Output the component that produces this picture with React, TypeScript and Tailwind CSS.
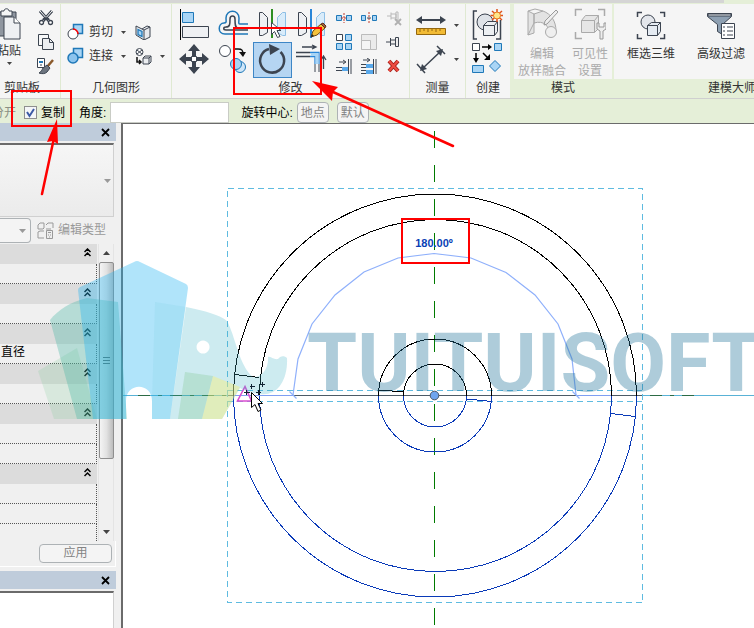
import { useState } from "react"
import type { ReactNode } from "react"

const dark = "#3c4450"
const blue = "#1f78b8"
const sky = "#a9d5f5"

function Svg({ w = 32, h = w, children }: { w?: number; h?: number; children: ReactNode }) {
  return <svg width={w} height={h} viewBox={`0 0 ${w} ${h}`} fill="none" className="block shrink-0">{children}</svg>
}

/* ---------- clipboard ---------- */
const PasteIcon = () => (
  <Svg w={26} h={32}>
    <path d="M1 4h19v24H1z" fill="#8f96a0" stroke={dark} />
    <path d="M5 5V3h3c0-3 5-3 5 0h3v5H5z" fill="#f4f5f6" stroke={dark} />
    <path d="M8 9h10l6 6v16H8z" fill="#eef0f3" stroke={dark} />
    <path d="M18 9v6h6" fill="#fff" stroke={dark} />
  </Svg>
)
const CutIcon = () => (
  <Svg w={16}>
    <path d="M2 1l9 10M14 1L5 11" stroke={dark} strokeWidth="3" />
    <path d="M2 1l9 10M14 1L5 11" stroke="#fff" />
    <path d="M5 9.500l3-1.500 3 1.500" stroke={dark} strokeWidth="2" />
    <circle cx="3.500" cy="12.500" r="2" fill="#fff" stroke={dark} strokeWidth="1.300" />
    <circle cx="12.500" cy="12.500" r="2" fill="#fff" stroke={dark} strokeWidth="1.300" />
  </Svg>
)
const CopyPagesIcon = () => (
  <Svg w={16}>
    <path d="M.5.5h10v11H.5z" fill="#f7f8f9" stroke={dark} />
    <path d="M4.500 4.500h7l4 4v7h-11z" fill="#eceef1" stroke={dark} />
    <path d="M11.500 4.500v4h4" stroke={dark} />
  </Svg>
)
const MatchIcon = () => (
  <Svg w={17}>
    <path d="M.5.5h7v9h-7z" fill="#fff" stroke={dark} />
    <path d="M2 3h4v2H2z" fill={blue} />
    <path d="M3 7h2" stroke={dark} />
    <path d="M16 2l-6 7" stroke="#8b5a2b" strokeWidth="2.500" />
    <path d="M10 7l3 3-3 4c-2 2-5 2-8 1 2-1 3-3 4-5z" fill="#6d7580" stroke={dark} />
  </Svg>
)

/* ---------- geometry ---------- */
const CopeIcon = () => (
  <Svg w={18}>
    <path d="M6.500 1.500h9v9h-9z" fill={sky} stroke={blue} strokeWidth="1.500" />
    <circle cx="6" cy="11" r="5" fill="#fff" stroke={dark} />
    <path d="M6 6a5 5 0 0 1 5 5" stroke="red" strokeWidth="1.500" />
  </Svg>
)
const JoinIcon = () => (
  <Svg w={18}>
    <path d="M6.500 1.500h9v9h-9z" fill={sky} stroke={blue} strokeWidth="1.500" />
    <circle cx="6" cy="11" r="5" fill="#8cc4ee" stroke={blue} strokeWidth="1.500" />
  </Svg>
)
const WallIcon = () => (
  <Svg w={16}>
    <path d="M1 2l6 3 5-3 3 1v10l-6 3-8-5z" fill="#e8eaee" stroke={dark} />
    <path d="M7 5l2 1v10M9 6l6-3" stroke={dark} />
    <path d="M3 5.500l4 2v5l-4-2z" fill={sky} stroke={blue} strokeWidth="1.300" />
  </Svg>
)
const DemolishIcon = () => (
  <Svg w={17}>
    <circle cx="4.500" cy="4" r="3.500" fill="#fff" stroke={dark} />
    <path d="M2 2l5 4M7 2L2 6" stroke={dark} />
    <path d="M2 9v5h4M4 12l2 2-2 2" stroke="#111" strokeWidth="1.500" />
    <path d="M8 10l2-2h6v6l-2 2H8z" fill="#eceef1" stroke={dark} />
    <path d="M8 10h6v6M14 10l2-2" stroke={dark} />
  </Svg>
)

/* ---------- modify, large ---------- */
const AlignIcon = () => (
  <Svg>
    <path d="M1.500 0v31" stroke="#000" />
    <path d="M3.500 3.500h11v10h-11z" fill={sky} stroke={blue} />
    <path d="M3.500 17.500h26v11h-26z" fill="#eef0f3" stroke={dark} />
  </Svg>
)
const OffsetIcon = () => (
  <Svg>
    <path d="M30 15h-8c-2 0-1-2-1-6 0-9-13-9-13 0 0 3 1 5-2 5-6 0-7 11 1 11h23" stroke={blue} strokeWidth="1.500" />
    <path d="M30 19H20c-3 0-3-4-3-9 0-4-5-4-5 0 0 5 0 8-4 8-3 0-3 3 0 3h22" stroke={dark} strokeWidth="1.500" />
  </Svg>
)
const MirrorPickIcon = () => (
  <Svg>
    <path d="M2.500 3.500h3l5 5v15l-5 3h-3z" fill="#eef0f3" stroke={dark} />
    <path d="M28.500 3.500h-3l-5 5v15l5 3h3z" fill="#d9ecfa" stroke="#8dbfe5" />
    <path d="M15 0v29" stroke="#2f8f22" strokeWidth="2" />
    <path d="M14.500 13.500v12l3-3 3 6 2.500-1-3-6h4z" fill="#fff" stroke={dark} />
  </Svg>
)
const MirrorDrawIcon = () => (
  <Svg>
    <path d="M2.500 3.500h3l5 5v15l-5 3h-3z" fill="#eef0f3" stroke={dark} />
    <path d="M28.500 3.500h-3l-5 5v15l5 3h3z" fill="#d9ecfa" stroke="#8dbfe5" />
    <path d="M15 0v29" stroke="#2a86d8" strokeWidth="2" />
    <path d="M15 28l2-6 8-7 4 4-8 7z" fill="#f4c23c" stroke="#6b4a12" />
    <path d="M25 15l2-1 3 3-1 2z" fill="#a35f3b" stroke="#5b2d1b" />
    <path d="M15 28l1-3 2 2z" fill="#222" />
  </Svg>
)
const MoveIcon = () => (
  <Svg>
    <path d="M15 0l6 7h-4v5h-4V7H9zM15 30l6-7h-4v-5h-4v5H9zM0 15l7-6v4h5v4H7v4zM30 15l-7-6v4h-5v4h5v4z" fill={dark} />
    <path d="M12.500 12.500h5v5h-5z" fill="#fff" stroke={dark} />
  </Svg>
)
const CopyIcon = () => (
  <Svg>
    <circle cx="7" cy="7" r="5.500" fill="#fff" stroke={dark} />
    <path d="M16 5h4c4 0 5 1 5 6" stroke="#111" strokeWidth="1.500" />
    <path d="M21 8l4 5 3-5z" fill="#111" />
    <circle cx="22" cy="23" r="5.500" fill="#cfe6f8" stroke={blue} />
    <circle cx="18" cy="20" r="5.500" fill={sky} stroke={blue} />
  </Svg>
)
const RotateIcon = () => (
  <Svg>
    <path d="M23.500 8A12 12 0 1 1 12 5" stroke={dark} strokeWidth="2.500" />
    <path d="M12 0l11 5-10 6z" fill={dark} />
  </Svg>
)
const TrimIcon = () => (
  <Svg>
    <path d="M6 3h13M16 1l4 2-4 2" stroke={dark} strokeWidth="1.300" />
    <path d="M0 8.500h14M0 12.500h14" stroke={dark} strokeWidth="1.300" />
    <path d="M14 8.500h9V20M14 12.500h5V20" stroke="#2a86d8" strokeWidth="1.300" />
    <path d="M15 10.500h6V20" stroke={sky} strokeWidth="3" />
    <path d="M19 20v8M23 20v8" stroke={dark} />
    <path d="M27.500 25V12M25 16l2.500-4 2.500 4" stroke={dark} strokeWidth="1.300" />
  </Svg>
)

/* ---------- modify, small ---------- */
const SplitIcon = () => (
  <Svg w={16}>
    <path d="M.500 5.500h5v5h-5zM10.500 5.500h5v5h-5z" fill={sky} stroke={blue} />
    <path d="M8 3v10M5 8h6" stroke="#c0392b" strokeDasharray="2 1" />
  </Svg>
)
const SplitGapIcon = () => (
  <Svg w={16}>
    <path d="M.500 5.500h4v5h-4zM11.500 5.500h4v5h-4z" fill={sky} stroke={blue} />
    <path d="M8 2v12" stroke="#c0392b" strokeDasharray="2 1" />
    <path d="M6 8h4" stroke={dark} />
  </Svg>
)
const UnpinIcon = () => (
  <Svg w={16}>
    <path d="M1 6h4M5 2.500v7M5 4h5v4H5M10 2v8h2V2z" stroke="#b9b9b9" />
    <path d="M9 9l6 6M15 9l-6 6" stroke="#b0b0b0" strokeWidth="1.800" />
  </Svg>
)
const ArrayIcon = () => (
  <Svg w={16}>
    <path d="M.500.500h6v6h-6z" fill="#fff" stroke={dark} />
    <path d="M9.500.500h6v6h-6zM.500 9.500h6v6h-6zM9.500 9.500h6v6h-6z" fill={sky} stroke={blue} />
  </Svg>
)
const ScaleIcon = () => (
  <Svg w={16}>
    <path d="M.500.500h15v15H.500z" fill="#ebebeb" stroke="#bbb" />
    <path d="M.500 6.500h9v9h-9z" fill="#f5f5f5" stroke="#bbb" />
  </Svg>
)
const PinIcon = () => (
  <Svg w={16}>
    <path d="M0 8h4M4.500 4v8M4.500 6h5v4h-5M9.500 3.500h3v9h-3z" fill="#eee" stroke={dark} />
  </Svg>
)
const ExtendOneIcon = () => (
  <Svg w={16}>
    <path d="M3 4h6M7 2l3 2-3 2M0 9.500h6M0 12.500h6M12.500 1v15M15 1v15" stroke={dark} />
    <path d="M6 11h6" stroke="#58a8ea" strokeWidth="4" />
  </Svg>
)
const ExtendManyIcon = () => (
  <Svg w={16}>
    <path d="M2 2h6M6 0l3 2-3 2M0 6.500h5M0 9.500h5M0 12.500h5M0 15.500h5M12.500 1v15M15 1v15" stroke={dark} />
    <path d="M5 8h7M5 14h7" stroke="#58a8ea" strokeWidth="4" />
  </Svg>
)
const DeleteIcon = () => (
  <Svg w={16}>
    <path d="M3 3l9 10M12 3L3 13" stroke="#a3211b" strokeWidth="4" />
    <path d="M3 3l9 10M12 3L3 13" stroke="#ee4b40" strokeWidth="2.200" />
  </Svg>
)

/* ---------- measure / create / mode ---------- */
const RulerIcon = () => (
  <Svg w={30} h={22}>
    <path d="M3 6h24" stroke={dark} strokeWidth="2" />
    <path d="M0 6l6-4v8zM30 6l-6-4v8z" fill={dark} />
    <path d="M.500 14.500h29v6H.500z" fill="#f2bb35" stroke="#94670f" />
    <path d="M4 15v3M8 15v2M12 15v3M16 15v2M20 15v3M24 15v2" stroke="#94670f" />
  </Svg>
)
const DimensionIcon = () => (
  <Svg w={30}>
    <path d="M6 25L25 7M1 20l8 9M21 2l8 8" stroke={dark} strokeWidth="1.500" />
    <path d="M4 27l2-7 5 5zM27 5l-2 7-5-5z" fill={dark} />
  </Svg>
)
const GroupIcon = () => (
  <Svg>
    <path d="M6 3H2.500v28H6M25 31h4.500V12" stroke={dark} strokeWidth="1.500" />
    <circle cx="14" cy="14" r="8" fill="#dfe3e8" stroke={dark} />
    <path d="M12.500 17.500l4-4h10v10l-3 4h-11z" fill="#eceff2" stroke={dark} />
    <path d="M12.500 17.500h11v10M23.500 17.500l3-4" stroke={dark} />
    <path d="M26 1v13M19.500 7.500h13M21 3l10 9M31 3l-10 9" stroke="#e0521b" strokeWidth="1.500" />
    <circle cx="26" cy="7.500" r="3.500" fill="#fde68a" stroke="#e8781e" />
  </Svg>
)
const SimilarIcon = () => (
  <Svg>
    <path d="M1.500 1.500h7v7h-7z" fill="#fff" stroke={dark} />
    <path d="M23.500 1.500h7v7h-7z" fill={sky} stroke={blue} />
    <path d="M11 5h8M5 11v8M12 11l6 6" stroke="#000" strokeWidth="1.500" />
    <path d="M17 2l4 3-4 3zM2 16l3 5 3-5zM19 12v6h-6z" fill="#000" />
    <path d="M1.500 23.500h11v7h-11zM24 18.500l5.500 5.500-5.500 5.500-5.500-5.500z" fill={sky} stroke={blue} />
  </Svg>
)
const BlendIcon = () => (
  <Svg>
    <path d="M2 3l6 3v19l-6 2zM8 6l9-3c8 3 13 10 13 20l-6 4C23 18 18 12 8 15z" fill="#e3e3e3" stroke="#aaa" />
    <path d="M2 27l6-12M2 3l7-2 8 2" stroke="#aaa" />
    <circle cx="25" cy="24" r="5.500" fill="#efefef" stroke="#aaa" />
    <path d="M18 17l1-4L30 2l2 2-11 12z" fill="#eee" stroke="#999" />
  </Svg>
)
const VisibilityIcon = () => (
  <Svg>
    <path d="M1.500 8V1.500H8M24 1.500h6.500V8M1.500 24v6.500H8" stroke="#aaa" strokeWidth="1.500" />
    <path d="M7.500 12.500l4-5h13v13l-4 4h-13z" fill="#e6e6e6" stroke="#aaa" />
    <path d="M7.500 12.500h13v12M20.500 12.500l4-5" stroke="#aaa" />
    <path d="M23 15v6l3 2v8h3v-8l3-2v-6h-2v4h-5v-4z" fill="#eee" stroke="#999" />
  </Svg>
)
const BoxSelectIcon = () => (
  <Svg w={30}>
    <path d="M1.500 7V2.500H6M24 2.500h4.500V7M1.500 24v4.500H6M24 28.500h4.500V24" stroke={dark} strokeWidth="1.500" />
    <circle cx="12" cy="12" r="7" fill="#e3e6eb" stroke={dark} />
    <path d="M11.500 15.500l4-3h9v9l-3 4h-10z" fill="#e5ebf2" stroke={dark} />
    <path d="M11.500 15.500h10v10M21.500 15.500l3-3" stroke={dark} />
  </Svg>
)
const FilterIcon = () => (
  <Svg w={30}>
    <path d="M1.500 3.500h24v3l-9 8v10l-5-3v-7l-10-8z" fill="#8ea0b2" stroke={dark} />
    <path d="M2 4h23v2H2z" fill="#e8edf2" stroke={dark} />
    <path d="M15.500 13.500h13v15h-13z" fill="#fff" stroke={dark} />
    <path d="M17 17h2M17 21h2M17 25h2M21 17h6M21 21h6M21 25h6" stroke={dark} />
  </Svg>
)
const EditTypeIcon = () => (
  <Svg w={17}>
    <path d="M1 3l2-2h4v5l-1 1H1zM9 3l2-2h5v5M1 10l2-1h4M1 10v6h6M9 7h5" stroke="#999" />
    <path d="M9.500 8.500h6v8h-6z" fill="#eee" stroke="#999" />
    <path d="M11 10.500h3M11 13h1M13 13h1M12 15h1" stroke="#999" />
  </Svg>
)

const Caret = () => <svg width="5" height="3" viewBox="0 0 5 3" className="shrink-0"><path d="M0 0h5L2.500 3z" fill="#444" /></svg>

const Chevrons = () => (
  <svg width="7" height="9" viewBox="0 0 7 9" fill="none" stroke="#000" strokeWidth="1.500"><path d="M.5 4l3-3 3 3M.5 8l3-3 3 3" /></svg>
)

function Tool({ label, className = "", children }: { label: string; className?: string; children: ReactNode }) {
  return <button type="button" aria-label={label} className={`flex items-center justify-center ${className}`}>{children}</button>
}

function Panel({ title, className = "", titleClass = "text-center", children }: { title: string; className?: string; titleClass?: string; children: ReactNode }) {
  return (
    <section className={`flex shrink-0 flex-col overflow-hidden bg-[#f5f5f5] ${className}`}>
      <div className="h-[75px]">{children}</div>
      <h2 className={`h-[19px] whitespace-nowrap leading-[19px] ${titleClass}`}>{title}</h2>
    </section>
  )
}

function BigTool({ icon, lines, disabled }: { icon: ReactNode; lines: string[]; disabled?: boolean }) {
  return (
    <button type="button" disabled={disabled} className="flex flex-col items-center gap-1.5 leading-[17px] whitespace-nowrap disabled:text-[#aaa]">
      {icon}
      <span>{lines.map(l => <span key={l} className="block">{l}</span>)}</span>
    </button>
  )
}

const bigTools: [string, () => ReactNode][] = [
  ["对齐", AlignIcon], ["偏移", OffsetIcon], ["镜像-拾取轴", MirrorPickIcon], ["镜像-绘制轴", MirrorDrawIcon],
  ["移动", MoveIcon], ["复制", CopyIcon], ["旋转", RotateIcon], ["修剪", TrimIcon],
]
const smallTools: [string, () => ReactNode][] = [
  ["拆分", SplitIcon], ["间隙拆分", SplitGapIcon], ["解锁", UnpinIcon],
  ["阵列", ArrayIcon], ["缩放", ScaleIcon], ["锁定", PinIcon],
  ["延伸单个", ExtendOneIcon], ["延伸多个", ExtendManyIcon], ["删除", DeleteIcon],
]

function Ribbon() {
  return (
    <div className="border-b border-[#cfcfcf] bg-[#e5efd8]">
      <div className="mr-[30px] h-[3px] bg-[#d5d5d5]" />
      <div className="flex overflow-hidden pt-px">
        <Panel title="剪贴板" className="w-[61px] border-r border-[#dfe9d2]" titleClass="pl-1">
          <div className="flex justify-between pr-1.5">
            <button type="button" className="-ml-1 flex flex-col items-center gap-0.5 pt-1">
              <PasteIcon />
              <span className="leading-[18px]">粘贴</span>
              <Caret />
            </button>
            <div className="flex flex-col gap-2 pt-1.5">
              <Tool label="剪切"><CutIcon /></Tool>
              <Tool label="复制"><CopyPagesIcon /></Tool>
              <Tool label="匹配类型"><MatchIcon /></Tool>
            </div>
          </div>
        </Panel>
        <Panel title="几何图形" className="w-[111px] border-r border-[#dfe9d2]">
          <div className="grid grid-cols-[60px_auto] items-center justify-start gap-x-2 gap-y-0.5 pt-[18px] pl-1.5">
            <button type="button" className="flex h-5 items-center gap-1 whitespace-nowrap"><CopeIcon />剪切<span className="pl-1"><Caret /></span></button>
            <Tool label="墙洞口" className="w-4"><WallIcon /></Tool>
            <button type="button" className="flex h-6 items-center gap-1 whitespace-nowrap"><JoinIcon />连接<span className="pl-1"><Caret /></span></button>
            <button type="button" aria-label="拆除" className="flex items-center gap-2"><DemolishIcon /><Caret /></button>
          </div>
        </Panel>
        <Panel title="修改" className="w-[238px] border-r border-[#dfe9d2]">
          <div className="flex pl-[3px]">
            <div className="grid grid-cols-[repeat(4,39px)] grid-rows-[34px_36px] pt-1">
              {bigTools.map(([label, Icon]) => (
                <Tool key={label} label={label} className={label === "旋转" ? "border border-[#3d86c6] bg-[#b5d5f2]" : ""}><Icon /></Tool>
              ))}
            </div>
            <div className="grid grid-cols-[repeat(3,25px)] grid-rows-[repeat(3,24px)] pt-0.5">
              {smallTools.map(([label, Icon]) => <Tool key={label} label={label}><Icon /></Tool>)}
            </div>
          </div>
        </Panel>
        <Panel title="测量" className="w-14 border-r border-[#dfe9d2]">
          <div className="flex flex-col gap-2 pt-2.5 pl-1.5">
            <button type="button" aria-label="测量" className="flex items-center gap-2"><RulerIcon /><Caret /></button>
            <button type="button" aria-label="尺寸标注" className="flex items-center gap-2"><DimensionIcon /><Caret /></button>
          </div>
        </Panel>
        <Panel title="创建" className="w-11">
          <div className="flex flex-col items-center gap-0.5 pt-1 pr-0.5">
            <Tool label="创建组"><GroupIcon /></Tool>
            <Tool label="创建类似"><SimilarIcon /></Tool>
          </div>
        </Panel>
        <Panel title="模式" className="ml-1 w-[98px]" titleClass="bg-[#e5efd8] text-center">
          <div className="flex justify-center gap-1.5 pt-1">
            <BigTool icon={<BlendIcon />} lines={["编辑", "放样融合"]} disabled />
            <BigTool icon={<VisibilityIcon />} lines={["可见性", "设置"]} disabled />
          </div>
        </Panel>
        <Panel title="建模大师" className="ml-0.5 min-w-[140px] flex-1" titleClass="bg-[#e5efd8] pl-[94px]">
          <div className="flex gap-[22px] pt-1.5 pl-[13px]">
            <BigTool icon={<BoxSelectIcon />} lines={["框选三维"]} />
            <BigTool icon={<FilterIcon />} lines={["高级过滤"]} />
          </div>
        </Panel>
      </div>
    </div>
  )
}

function OptionsBar() {
  const [copy, setCopy] = useState(true)
  const [angle, setAngle] = useState("")
  return (
    <form className="flex h-6 items-center overflow-hidden bg-[#e5efd8] pt-[3px] whitespace-nowrap text-black" onSubmit={e => e.preventDefault()}>
      <span className="-ml-2 text-[#8a8f84]">分开</span>
      <label className="ml-2 flex items-center gap-1">
        <span className="relative h-[13px] w-[13px]">
          <input type="checkbox" checked={copy} onChange={e => setCopy(e.target.checked)}
            className="block h-[13px] w-[13px] appearance-none border border-[#8e8f8f] bg-[#f4f6f8]" />
          {copy && <svg viewBox="0 0 13 13" className="pointer-events-none absolute inset-0"><path d="M3 6l2.500 4L10 3" fill="none" stroke="#3c5aa5" strokeWidth="2" /></svg>}
        </span>
        复制
      </label>
      <label htmlFor="angle" className="ml-3.5">角度:</label>
      <input id="angle" value={angle} onChange={e => setAngle(e.target.value)}
        className="ml-1 h-[21px] w-[119px] border border-[#c9ccc5] bg-white px-1 outline-none" />
      <span className="ml-3">旋转中心:</span>
      <button type="button" className="ml-1 h-[21px] w-8 rounded-sm border border-[#adb2b5] bg-[#f4f4f4] text-[#838383]">地点</button>
      <button type="button" className="ml-2 h-[21px] w-8 rounded-sm border border-[#adb2b5] bg-[#f4f4f4] text-[#838383]">默认</button>
    </form>
  )
}

const rows = [
  { head: true }, {}, { head: true }, {}, { head: true }, { text: "直径" }, { head: true }, {},
  { head: true }, {}, {}, { head: true }, {}, {},
] as { head?: boolean; text?: string }[]

function TitleBar() {
  return (
    <div className="mr-[5px] flex h-[18px] items-center justify-end bg-[#bfccdb] pr-1.5">
      <button type="button" aria-label="关闭">
        <svg width="9" height="9" viewBox="0 0 9 9" className="block"><path d="M1 1l7 7M8 1L1 8" stroke="#000" strokeWidth="1.800" /></svg>
      </button>
    </div>
  )
}

function Palette() {
  return (
    <aside className="flex w-[121px] shrink-0 flex-col bg-[#f0f0f0]">
      <TitleBar />
      <div className="mt-0.5 mr-[7px] flex h-[74px] items-center justify-end border-t-2 border-r border-b border-t-[#6b6b6b] border-r-[#d0d0d0] border-b-[#d0d0d0] bg-gradient-to-b from-[#f6f6f6] to-[#ebebeb] pr-0.5">
        <button type="button" aria-label="类型选择器"><svg width="7" height="4" viewBox="0 0 7 4"><path d="M0 0h7L3.500 4z" fill="#999" /></svg></button>
      </div>
      <div className="flex h-[27px] items-center pb-px">
        <span className="relative">
          <select aria-label="实例" className="block h-[25px] w-[31px] appearance-none rounded-r-sm border border-l-0 border-[#adb2b5] bg-[#f4f4f4]" />
          <svg width="7" height="4" viewBox="0 0 7 4" className="pointer-events-none absolute top-[11px] right-[5px]"><path d="M0 0h7L3.500 4z" fill="#999" /></svg>
        </span>
        <button type="button" className="ml-1.5 flex items-center gap-1 whitespace-nowrap text-[#999]"><EditTypeIcon />编辑类型</button>
      </div>
      <div className="flex h-[297px]">
        <div className="w-[97px] overflow-hidden">
          {rows.map((r, i) => r.head ? (
            <div key={i} className="flex h-5 items-center justify-end bg-[#dcdcdc] pr-1.5 pb-[3px]">
              <button type="button" aria-label="折叠" className="leading-none"><Chevrons /></button>
            </div>
          ) : (
            <div key={i} className="h-5 border-r border-b border-dotted border-[#555] pl-px leading-[17px] text-black">{r.text}</div>
          ))}
          <div className="h-[17px] border-r border-dotted border-[#555]" />
        </div>
        <div className="ml-px flex w-4 flex-col items-center border-x border-[#e4e4e4] bg-[#f0f0f0]">
          <span className="flex h-[18px] items-center"><svg width="7" height="4" viewBox="0 0 7 4"><path d="M0 4h7L3.500 0z" fill="#444" /></svg></span>
          <div className="flex h-[197px] w-[15px] flex-col items-center justify-center gap-0.5 rounded-xs border border-[#8f8f8f] bg-gradient-to-r from-[#f4f4f4] via-[#e2e2e2] to-[#bdbdbd]">
            <i className="h-px w-[7px] bg-[#555]" /><i className="h-px w-[7px] bg-[#555]" /><i className="h-px w-[7px] bg-[#555]" />
          </div>
          <span className="mt-auto flex h-[18px] items-center"><svg width="7" height="4" viewBox="0 0 7 4"><path d="M0 0h7L3.500 4z" fill="#444" /></svg></span>
        </div>
      </div>
      <div className="mr-[5px] flex h-[26px] items-start justify-end border-r border-b border-white pt-[3px] pr-[3px]">
        <button type="button" className="h-[19px] w-[73px] rounded-sm border border-[#adb2b5] bg-[#f4f4f4] leading-[17px] text-[#838383]">应用</button>
      </div>
      <div className="h-1" />
      <TitleBar />
      <div className="mt-0.5 mr-[7px] flex-1 border-t-2 border-r border-t-[#6b6b6b] border-r-[#d0d0d0] bg-white" />
    </aside>
  )
}

/* Family editor view; units are window pixels */
function DrawingView() {
  return (
    <main className="relative min-w-0 flex-1 overflow-hidden border-t border-l-2 border-[#6b6b6b] bg-white">
      <svg viewBox="123 124 631 504" preserveAspectRatio="xMinYMin slice" className="absolute inset-0 h-full w-full" fill="none" shapeRendering="crispEdges">
        <path d="M434.500 131v497" stroke="#007a00" strokeDasharray="17 17.070" />
        <path d="M123 395.500h631" stroke="#59b2d6" />
        <path d="M138 395.500h560" stroke="#2c6b45" strokeDasharray="12 8 4 8" />
        <path d="M227 395.500h415" stroke="#4c5a66" />
        <path d="M227.500 188.500h415v414h-415zM227 390.500h415M227 401.500h415" stroke="#5fbbe0" strokeDasharray="6 4" />
        <g stroke="#000">
          <path d="M233.500 395.500a201.500 201.500 0 0 1 403 0M259.500 395.500a176 176 0 0 1 352 0M378.500 395.500a56.500 56.500 0 0 1 113 0M403.500 395.500a31.500 31.500 0 0 1 63 0" />
          <path d="M234.500 374.500l25 3M379 390l25 2" />
        </g>
        <g stroke="#0a3ab8">
          <path d="M233.500 395.500a201.500 201.500 0 0 0 403 0M259.500 395.500a176 176 0 0 0 352 0M378.500 395.500a56.500 56.500 0 0 0 113 0M403.500 395.500a31.500 31.500 0 0 0 63 0" />
          <path d="M610.500 413.500l25 3M466.500 399l25 2.500" />
        </g>
        <path d="M234 395.500h59M576 395.500h35" stroke="#7f9ff2" />
        <g shapeRendering="auto" stroke="#8fb0fb" strokeWidth="1.200">
          <path d="M293 395l5-36 14-35 23-29 29-23 34-14 36-4.500 37 4.500 35 14.500 29 22.500 23 29 14 35 4 36" />
          <path d="M289.500 391.500l7 7M572.500 391.500l7 7" />
        </g>
        <g shapeRendering="auto">
          <circle cx="434.500" cy="395.500" r="4.300" fill="#6ea4ee" stroke="#4a5566" />
          <path d="M245 386.500l-7.500 14.500h14z" stroke="#d94fd0" strokeWidth="1.600" />
          <text x="434" y="247" textAnchor="middle" fill="#0a3fb5" className="font-[Liberation_Sans] text-[11px] font-bold">180.00º</text>
        </g>
      </svg>
    </main>
  )
}

function Watermark() {
  return (
    <div aria-hidden="true" className="pointer-events-none absolute inset-0 overflow-hidden">
      <svg width="300" height="440" viewBox="0 0 300 440" className="absolute top-0 left-0">
        <path d="M38 371l39-23 20 71H54z" fill="#70c58a" opacity=".18" />
        <path d="M50 320c8-10 20-18 37-22l31 4 9 117H77z" fill="#45b5a4" opacity=".34" />
        <path d="M78 290q0-2 2-3l54-25q3-2 6 0l46 22q2 1 2 4l-18 131h-18v-18c0-19-26-19-26 0v18H93z" fill="#25b3f2" opacity=".36" />
        <path d="M155 302l31 5-16 112h-18v-18z" fill="#37b0c4" opacity=".08" />
        <path fillRule="evenodd" d="M186 307c19 4 34 8 41 14 8 14 12 45 26 56 8 1 16-8 15-20 2-1 6 3 10 2 2-3 6-4 9-1 1 20-8 35-21 36-10 1-19-2-26-6l-18 31h-52zM203 340.500a6.500 6.500 0 1 0 .1 0z" fill="#37b0c4" opacity=".25" />
        <path d="M185 372l28 4-11 43h-24z" fill="#58b460" opacity=".2" />
        <path d="M213 376l27 11-18 32h-20z" fill="#f8ef7a" opacity=".45" />
      </svg>
      <span className="absolute top-[320px] left-[307px] font-[Roboto,sans-serif] text-[81px] leading-[88px] font-bold text-[#1f7399]/36">TUITUISOFT</span>
    </div>
  )
}

function Annotations() {
  return (
    <svg aria-hidden="true" width="480" height="430" viewBox="0 0 480 430" fill="none" className="pointer-events-none absolute top-0 left-0">
      <g stroke="#123" shapeRendering="crispEdges">
        <path d="M251.500 384v5M249.500 386.500h5M244 392.500h6M246.500 390v5M256 392.500h5M258.500 390v5M262.500 382v5M260 384.500h5" />
      </g>
      <path d="M251.500 392.500v15l3.500-3 3 7 3-1.500-3-6.500h4.500z" fill="#fff" stroke="#000" />
      <g stroke="red" strokeWidth="2">
        <path d="M12 91h59v35H12zM234 28h87v66h-87zM402 219h67v44h-67z" />
        <path d="M42 194l12-56M453 146L333 92" strokeWidth="2.500" strokeLinecap="round" />
      </g>
      <path d="M57 119l1 25-5-3-6 1zM312 81l26 6-5 5-1 9z" fill="red" />
    </svg>
  )
}

export default function App() {
  return (
    <div className="relative flex min-h-screen flex-col overflow-hidden bg-[#f0f0f0] font-['Liberation_Sans','Noto_Sans_CJK_SC',sans-serif] text-xs text-[#333]">
      <Ribbon />
      <OptionsBar />
      <div className="flex min-h-[505px] flex-1">
        <Palette />
        <DrawingView />
      </div>
      <Watermark />
      <Annotations />
    </div>
  )
}
